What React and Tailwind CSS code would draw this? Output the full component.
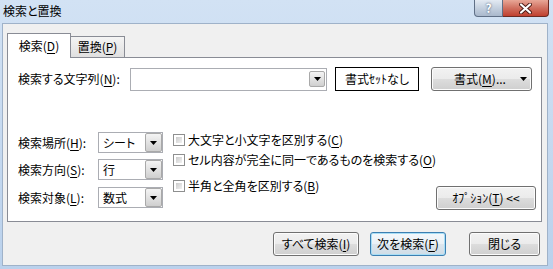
import React from "react";

const btnClass =
  "h-[24px] flex items-center justify-center border border-[#707070] rounded-[3px] bg-[linear-gradient(#f2f2f2_0%,#ebebeb_50%,#dddddd_50%,#cfcfcf_100%)] shadow-[inset_0_0_0_1px_#fcfcfc]";

function Arrow() {
  return (
    <svg width="7" height="4" viewBox="0 0 7 4">
      <path d="M0 0h7L3.5 4z" fill="#000" />
    </svg>
  );
}

function DropBtn({ className }) {
  return (
    <div
      className={`flex items-center justify-center border border-[#a9a9a9] rounded-[2px] bg-[linear-gradient(#f4f4f4,#e2e2e2_50%,#cfcfcf)] ${className}`}
    >
      <Arrow />
    </div>
  );
}

function Key({ k }) {
  return <span className="underline underline-offset-2">{k}</span>;
}

function Combo({ value }) {
  return (
    <div className="w-[65px] h-[21px] border border-[#abadb3] bg-white flex items-center justify-between pl-[4px]">
      <span>{value}</span>
      <DropBtn className="w-[17px] h-[19px]" />
    </div>
  );
}

function Check({ children, className }) {
  return (
    <div className={`h-[16px] flex items-center ${className}`}>
      <div className="w-[12px] h-[12px] shrink-0 border border-[#8e8f8f] bg-white p-[2px]">
        <div className="w-full h-full bg-[linear-gradient(135deg,#cbcbcb,#f2f2f2)]" />
      </div>
      <span className="ml-[3px]">{children}</span>
    </div>
  );
}

export default function App() {
  return (
    <div className="w-[553px] h-[269px] overflow-hidden whitespace-nowrap flex flex-col bg-[linear-gradient(#d2e2f4,#bad1ec)] font-['Noto_Sans_CJK_JP',sans-serif] text-[12px] leading-[16px] text-black [font-feature-settings:'palt']">
      {/* title bar */}
      <div className="h-[23px] shrink-0 flex justify-between">
        <div className="pl-[3px] pt-[3px]">検索と置換</div>
        <div className="flex items-start pr-[4px]">
          <div className="w-[29px] h-[17px] border border-[#5f6f86] border-t-0 rounded-bl-[4px] bg-[linear-gradient(#e3eaf3,#c4d0df_50%,#a9b8cc)] flex items-center justify-center text-white font-bold text-[12px] leading-none [text-shadow:0_0_2px_#2c3e58]">
            ?
          </div>
          <div className="w-[46px] h-[17px] border border-[#6b2a22] border-t-0 border-l-0 rounded-br-[4px] bg-[linear-gradient(#e8a797,#d07060_50%,#c0402f)] flex items-center justify-center">
            <svg width="13" height="11" viewBox="0 0 13 11">
              <path d="M2 1.5l9 8M11 1.5l-9 8" stroke="#4a1a14" strokeWidth="4" strokeLinecap="round" />
              <path d="M2 1.5l9 8M11 1.5l-9 8" stroke="#fff" strokeWidth="2.2" strokeLinecap="round" />
            </svg>
          </div>
        </div>
      </div>

      {/* client */}
      <div className="ml-[2px] w-[546px] h-[243px] shrink-0 bg-[#f0f0f0] border border-[#9fb2c9] flex flex-col">
        {/* tabs */}
        <div className="mt-[9px] ml-[4px] h-[24px] flex items-end">
          <div className="relative z-10 -mb-px w-[64px] h-[25px] border border-b-0 border-[#898c95] bg-white flex items-center justify-center">
            検索(<Key k="D" />)
          </div>
          <div className="w-[54px] h-[21px] border border-l-0 border-b-0 border-[#898c95] bg-[linear-gradient(#f4f4f4,#e0e0e0)] flex items-center justify-center">
            置換(<Key k="P" />)
          </div>
        </div>

        {/* panel */}
        <div className="ml-[4px] w-[535px] h-[165px] border border-[#898c95] bg-white flex flex-col">
          <div className="mt-[9px] h-[24px] flex items-center">
            <div className="w-[122px] pl-[10px]">
              検索する文字列(<Key k="N" />):
            </div>
            <div className="w-[197px] h-[23px] border border-[#abadb3] bg-white flex items-center justify-end pr-px">
              <DropBtn className="w-[16px] h-[16px]" />
            </div>
            <div className="ml-[8px] w-[84px] h-[24px] border border-black bg-white flex items-center justify-center">
              書式ｾｯﾄなし
            </div>
            <div className={`${btnClass} ml-[12px] w-[101px] pr-[4px]`}>
              <span className="flex-1 text-center pl-[8px]">
                書式(<Key k="M" />)...
              </span>
              <Arrow />
            </div>
          </div>

          <div className="mt-[41px] flex items-start pr-[8px]">
            <div className="flex flex-col gap-[6px] shrink-0">
              <div className="flex items-center">
                <div className="w-[90px] pl-[10px]">
                  検索場所(<Key k="H" />):
                </div>
                <Combo value="シート" />
              </div>
              <div className="flex items-center">
                <div className="w-[90px] pl-[10px]">
                  検索方向(<Key k="S" />):
                </div>
                <Combo value="行" />
              </div>
              <div className="flex items-center mt-px">
                <div className="w-[90px] pl-[10px]">
                  検索対象(<Key k="L" />):
                </div>
                <Combo value="数式" />
              </div>
            </div>

            <div className="ml-[10px] flex flex-col shrink-0">
              <Check>
                大文字と小文字を区別する(<Key k="C" />)
              </Check>
              <Check className="mt-[4px]">
                セル内容が完全に同一であるものを検索する(<Key k="O" />)
              </Check>
              <Check className="mt-[10px]">
                半角と全角を区別する(<Key k="B" />)
              </Check>
            </div>

            <div className={`${btnClass} shrink-0 ml-auto mt-[54px] w-[100px]`}>
              ｵﾌﾟｼｮﾝ(<Key k="T" />) &lt;&lt;
            </div>
          </div>
        </div>

        {/* bottom buttons */}
        <div className="mt-[10px] flex justify-end pr-[7px]">
          <div className={`${btnClass} w-[86px]`}>
            すべて検索(<Key k="I" />)
          </div>
          <div className="ml-[11px] w-[76px] h-[24px] flex items-center justify-center border border-[#3c7fb1] rounded-[3px] bg-[linear-gradient(#f4f8fb_0%,#eaf1f6_50%,#dce6ee_50%,#cfdce6_100%)] shadow-[inset_0_0_0_1px_#a8def6]">
            次を検索(<Key k="F" />)
          </div>
          <div className={`${btnClass} ml-[23px] w-[71px]`}>閉じる</div>
        </div>
      </div>
    </div>
  );
}
